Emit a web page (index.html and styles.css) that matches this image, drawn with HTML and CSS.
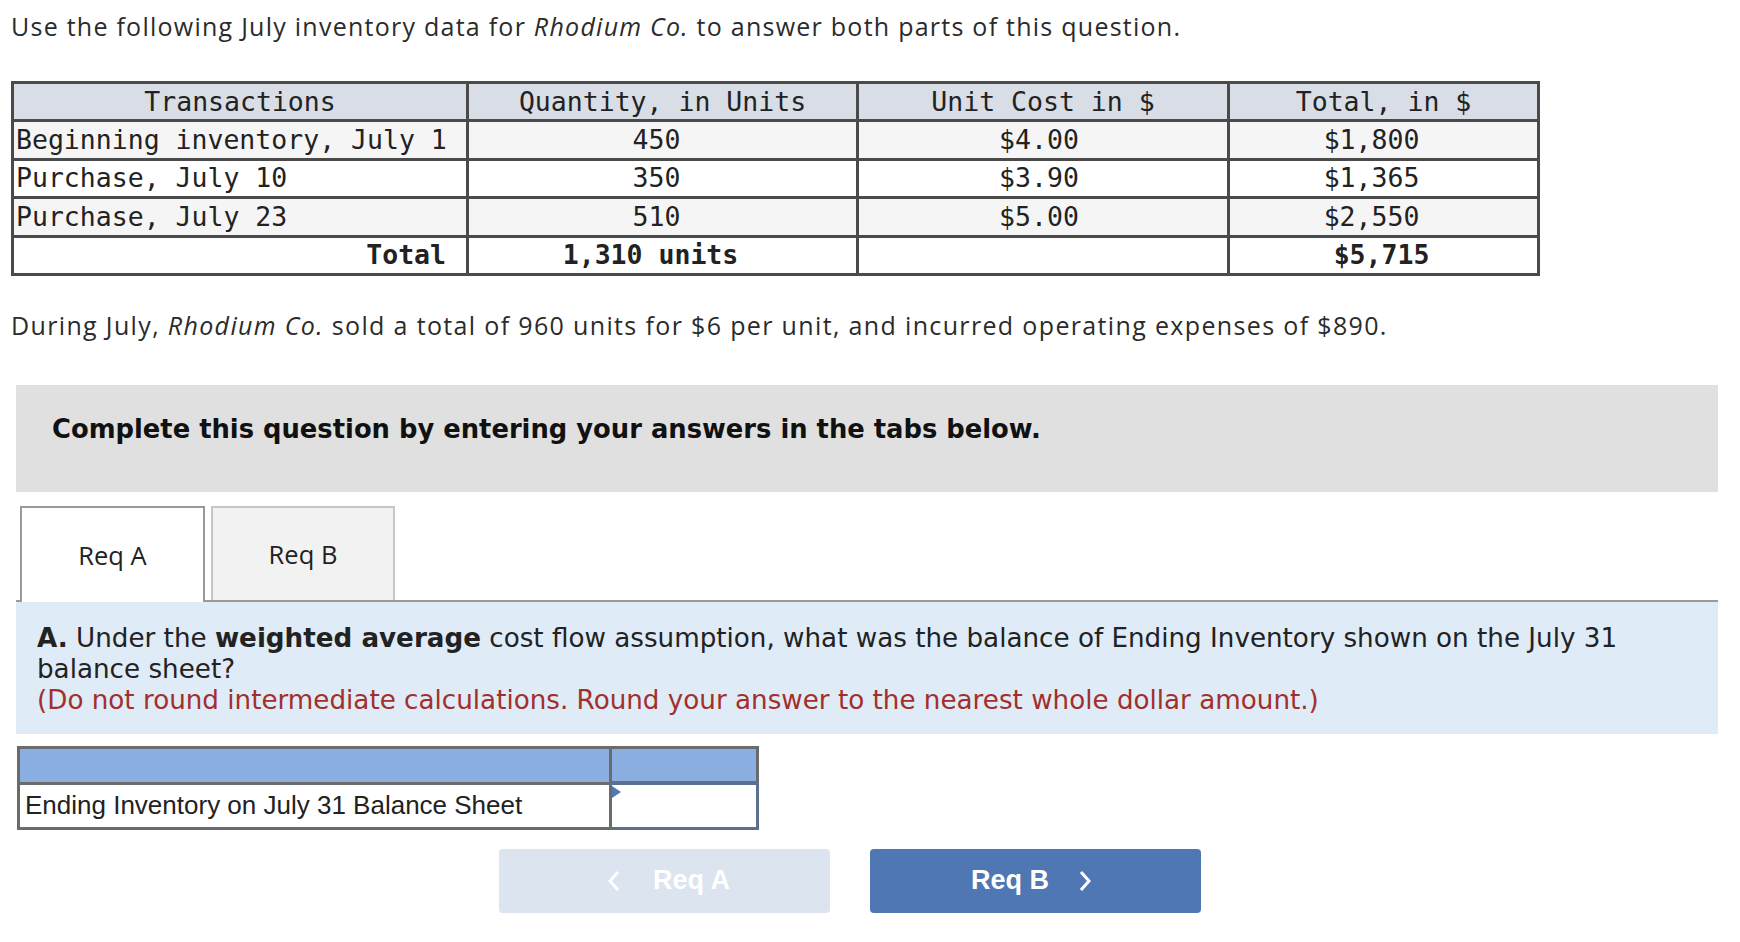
FILE: index.html
```html
<!DOCTYPE html>
<html>
<head>
<meta charset="utf-8">
<link rel="stylesheet" href="styles.css">
</head>
<body>
<div class="page">
  <p class="intro">Use the following July inventory data for <em>Rhodium Co.</em> to answer both parts of this question.</p>

  <table class="inv">
    <colgroup>
      <col class="c1"><col class="c2"><col class="c3"><col class="c4">
    </colgroup>
    <tr class="head">
      <td class="ctr">Transactions</td>
      <td class="ctr">Quantity, in Units</td>
      <td class="ctr">Unit Cost in $</td>
      <td class="ctr">Total, in $</td>
    </tr>
    <tr class="alt">
      <td>Beginning inventory, July 1</td>
      <td class="ctr q">450</td>
      <td class="ctr u">$4.00</td>
      <td class="ctr t">$1,800</td>
    </tr>
    <tr>
      <td>Purchase, July 10</td>
      <td class="ctr q">350</td>
      <td class="ctr u">$3.90</td>
      <td class="ctr t">$1,365</td>
    </tr>
    <tr class="alt">
      <td>Purchase, July 23</td>
      <td class="ctr q">510</td>
      <td class="ctr u">$5.00</td>
      <td class="ctr t">$2,550</td>
    </tr>
    <tr class="tot">
      <td class="rt">Total</td>
      <td class="ctr qt">1,310 units</td>
      <td></td>
      <td class="ctr tt">$5,715</td>
    </tr>
  </table>

  <p class="intro sold">During July, <em>Rhodium Co.</em> sold a total of 960 units for $6 per unit, and incurred operating expenses of $890.</p>

  <div class="task">
    <div class="banner">Complete this question by entering your answers in the tabs below.</div>

    <div class="tabs">
      <div class="tab active">Req A</div>
      <div class="tab">Req B</div>
    </div>

    <div class="prompt">
      <p><b>A.</b> Under the <b>weighted average</b> cost flow assumption, what was the balance of Ending Inventory shown on the July 31 balance sheet?</p>
      <p class="hint">(Do not round intermediate calculations. Round your answer to the nearest whole dollar amount.)</p>
    </div>

    <table class="ans">
      <tr class="ans-head"><td class="lbl"></td><td class="inp-h"></td></tr>
      <tr class="ans-row">
        <td class="lbl">Ending Inventory on July 31 Balance Sheet</td>
        <td class="inp"><span class="marker"></span></td>
      </tr>
    </table>

    <div class="nav">
      <div class="btn prev">
        <svg class="chev" width="13" height="24" viewBox="0 0 13 24"><polyline points="11,3 3,12 11,21" fill="none" stroke="#fff" stroke-width="3"/></svg>
        <span>Req A</span>
      </div>
      <div class="btn next">
        <span>Req B</span>
        <svg class="chev" width="13" height="24" viewBox="0 0 13 24"><polyline points="2,3 10,12 2,21" fill="none" stroke="#fff" stroke-width="3"/></svg>
      </div>
    </div>
  </div>
</div>
</body>
</html>
```

FILE: styles.css
```css
* { box-sizing: border-box; }
body { margin: 0; background: #fff; color: #222; }
.page { padding: 0 22px 0 11px; }

.intro {
  font-family: "Open Sans", Lato, sans-serif;
  font-size: 25px;
  letter-spacing: 1.25px;
  line-height: 30px;
  margin: 11px 0 0;
  color: #2b2b2b;
}
.intro em { font-style: italic; }
.sold { margin-top: 34px; letter-spacing: 1.35px; }

.inv {
  border-collapse: collapse;
  margin-top: 40px;
  width: 1526px;
  table-layout: fixed;
  font-family: "DejaVu Sans Mono", monospace;
  font-size: 26.5px;
  color: #222;
}
.inv .c1 { width: 455px; }
.inv .c2 { width: 390px; }
.inv .c3 { width: 371px; }
.inv .c4 { width: 310px; }
.inv td {
  border: 3px solid #4a4a4a;
  height: 38.4px;
  padding: 0 2px;
  white-space: nowrap;
  line-height: 30px;
}
.inv .head td { background: #d9dde5; }
.inv .alt td { background: #f5f5f5; }
.inv .ctr { text-align: center; }
.inv .rt { text-align: right; padding-right: 20px; }
.inv .q { padding-right: 14px; }
.inv .u { padding-right: 10px; }
.inv .t { padding-right: 26px; }
.inv .qt { padding-right: 26px; }
.inv .tt { padding-right: 6px; }
.inv .tot td { font-weight: bold; background: #fff; }

.task { margin: 45px 0 0 5px; }
.banner {
  background: #e0e0e0;
  height: 107px;
  padding: 29px 0 0 36px;
  font-family: "DejaVu Sans", Verdana, sans-serif;
  font-weight: bold;
  font-size: 25.8px;
  line-height: 30px;
  color: #111;
}

.tabs {
  display: flex;
  gap: 6px;
  margin-top: 14px;
  padding-left: 4px;
  border-bottom: 2px solid #999;
  height: 96px;
}
.tab {
  width: 184px;
  height: 94px;
  display: flex;
  align-items: center;
  justify-content: center;
  font-family: "Open Sans", sans-serif;
  font-size: 25.5px;
  color: #222;
  background: #f2f2f2;
  border: 2px solid #c6c6c6;
  border-bottom: none;
}
.tab.active {
  width: 185px;
  height: 96px;
  background: #fff;
  border-color: #999;
  margin-bottom: -2px;
}

.prompt {
  background: #dfebf7;
  height: 132px;
  padding: 21px 21px 0;
  font-family: "DejaVu Sans", Verdana, sans-serif;
  font-size: 26.2px;
  line-height: 31px;
  color: #222;
}
.prompt p { margin: 0; }
.prompt .hint { color: #a32f2b; }

.ans {
  border-collapse: collapse;
  margin: 12px 0 0 1px;
  width: 742px;
  table-layout: fixed;
}
.ans td { border: 3px solid #6b6b6b; padding: 0; }
.ans .lbl { width: 592px; }
.ans-head td { background: #8aaee0; height: 36px; }
.ans-row td { height: 45px; }
.ans-row .lbl {
  font-family: "Liberation Sans", Arial, sans-serif;
  font-size: 26px;
  color: #222;
  padding-left: 5px;
}
.ans .inp {
  border: 3px solid #5b6f8e;
  border-top-width: 4px;
  background: #fff;
  position: relative;
  vertical-align: top;
}
.marker {
  position: absolute;
  left: 0;
  top: 1px;
  width: 0;
  height: 0;
  border-top: 6px solid transparent;
  border-bottom: 6px solid transparent;
  border-left: 9px solid #4f78b4;
}

.nav {
  display: flex;
  gap: 40px;
  margin: 19px 0 0 483px;
}
.btn {
  width: 331px;
  height: 64px;
  border-radius: 4px;
  display: flex;
  align-items: center;
  justify-content: center;
  font-family: "Liberation Sans", Arial, sans-serif;
  font-weight: bold;
  font-size: 27px;
  color: #fff;
}
.prev { background: #dbe4ef; gap: 33px; padding-left: 8px; }
.next { background: #4f77b3; gap: 30px; padding-right: 8px; }
```
